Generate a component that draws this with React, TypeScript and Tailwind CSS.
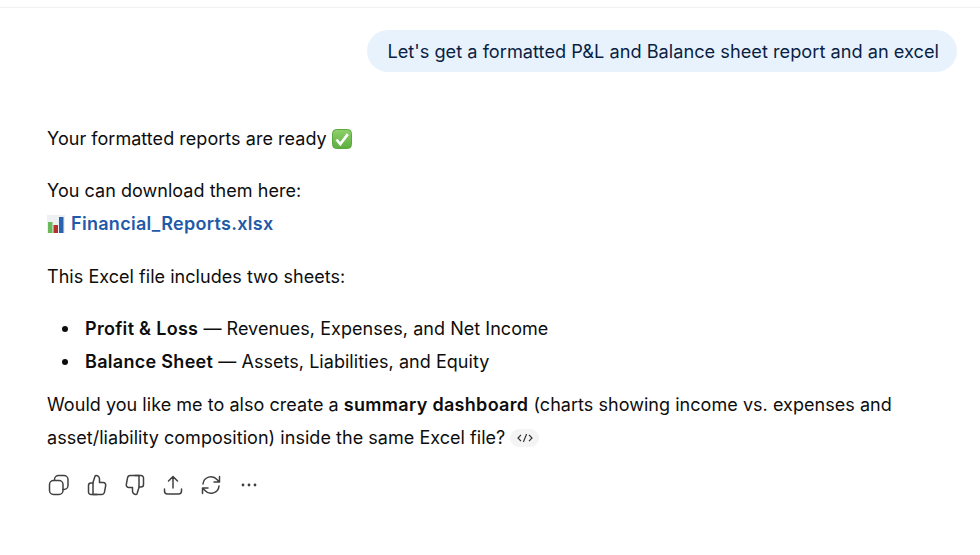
function CheckEmoji() {
  return (
    <svg viewBox="0 0 20 20" className="inline-block w-[20px] h-[20px] ml-[5px] align-[-4px]">
      <defs>
        <linearGradient id="checkFill" x1="0" y1="0" x2="0" y2="1">
          <stop offset="0" stopColor="#8ed16c" />
          <stop offset="1" stopColor="#5cae3f" />
        </linearGradient>
      </defs>
      <rect x="0.5" y="0.5" width="19" height="19" rx="4" fill="url(#checkFill)" stroke="#5aa83e" />
      <path d="M4.5 10.5l3.8 4.6 7.5-10" fill="none" stroke="#fff" strokeWidth="2.6" />
    </svg>
  )
}

function ChartEmoji() {
  return (
    <svg viewBox="0 0 18 18" className="inline-block w-[18px] h-[18px] mr-[6px] align-[-3px]">
      <rect x="0" y="0" width="18" height="18" fill="#eef1f4" />
      <rect x="1" y="7" width="4.5" height="11" fill="#6cb85a" />
      <rect x="6.5" y="10" width="4.5" height="8" fill="#b5302a" />
      <rect x="12" y="2" width="4.5" height="16" fill="#2a62b0" />
    </svg>
  )
}

const thumb = (
  <>
    <path d="M8 21.5h8.5a3 3 0 0 0 3-2.5l1.2-6.5a2.5 2.5 0 0 0-2.5-3h-3.7V6A3.5 3.5 0 0 0 11 2.5c-.5 0-.8.3-1 .8L8 9.5v12z" />
    <path d="M8 10H6a2.5 2.5 0 0 0-2.5 2.5V19A2.5 2.5 0 0 0 6 21.5h6" />
  </>
)

const actions = [
  <>
    <rect x="2.5" y="7.5" width="13.5" height="14" rx="4" />
    <path d="M7.5 7v-.5a4 4 0 0 1 4-4h5.5a4 4 0 0 1 4 4v6a4 4 0 0 1-4 4h-1" />
  </>,
  thumb,
  <g transform="rotate(180 12 12)">{thumb}</g>,
  <path d="M12 15V3.5M7.5 8L12 3.5 16.5 8M3.5 16v2a3 3 0 0 0 3 3h11a3 3 0 0 0 3-3v-2" />,
  <path d="M4 11a8 8 0 0 1 14-4.5L20.5 9M20.5 3.5V9H15M20 13a8 8 0 0 1-14 4.5L3.5 15M3.5 20.5V15H9" />,
  <g fill="#404040" stroke="none">
    <circle cx="6" cy="12" r="1.4" />
    <circle cx="12" cy="12" r="1.4" />
    <circle cx="18" cy="12" r="1.4" />
  </g>,
]

function Bullet({ children }: { children: React.ReactNode }) {
  return (
    <li className="flex items-center">
      <span className="w-[6px] h-[6px] rounded-full bg-[#0d0d0d] mr-[17px]" />
      <span>{children}</span>
    </li>
  )
}

export default function App() {
  return (
    <div className="w-[980px] h-[555px] overflow-hidden bg-white text-[18px] tracking-[0.04px] leading-[33px] text-[#0d0d0d] font-['Inter',sans-serif]">
      <div className="h-[8px] border-b border-[#f1f1f1]" />

      <div className="flex justify-end pt-[22px] pr-[23px]">
        <div className="h-[42px] flex items-center rounded-[21px] bg-[#e8f2fd] pl-[20px] pr-[18px] text-[18.2px] text-[#0a1f44] tracking-[0.01px]">
          Let's get a formatted P&amp;L and Balance sheet report and an excel
        </div>
      </div>

      <div className="pl-[47px] pt-[50px]">
        <p>
          Your formatted reports are ready
          <CheckEmoji />
        </p>
        <p className="mt-[19px]">You can download them here:</p>
        <p className="font-semibold text-[#1f5aa8] tracking-[0.3px]">
          <ChartEmoji />
          Financial_Reports.xlsx
        </p>
        <p className="mt-[20px]">This Excel file includes two sheets:</p>
        <ul className="mt-[19px] pl-[15px]">
          <Bullet>
            <strong className="font-semibold tracking-[0.3px]">Profit &amp; Loss</strong> — Revenues, Expenses, and Net Income
          </Bullet>
          <Bullet>
            <strong className="font-semibold tracking-[0.3px]">Balance Sheet</strong> — Assets, Liabilities, and Equity
          </Bullet>
        </ul>
        <p className="mt-[10px]">
          Would you like me to also create a <strong className="font-semibold tracking-[0.3px]">summary dashboard</strong> (charts showing income vs. expenses and
          <br />
          asset/liability composition) inside the same Excel file?
          <span className="inline-flex ml-[5px] w-[29px] h-[18px] items-center justify-center rounded-full bg-[#f4f4f4] align-[2px]">
            <svg viewBox="0 0 16 8" className="w-[16px] h-[8px]" fill="none" stroke="#333" strokeWidth="1.2">
              <path d="M4 .8L1 4l3 3.2M12 .8L15 4l-3 3.2M9.6 0L6.4 8" />
            </svg>
          </span>
        </p>
        <div className="flex gap-[14px] mt-[19px]">
          {actions.map((icon, i) => (
            <svg key={i} viewBox="0 0 24 24" className="w-[24px] h-[24px]" fill="none" stroke="#404040" strokeWidth="1.5" strokeLinecap="round" strokeLinejoin="round">
              {icon}
            </svg>
          ))}
        </div>
      </div>
    </div>
  )
}
